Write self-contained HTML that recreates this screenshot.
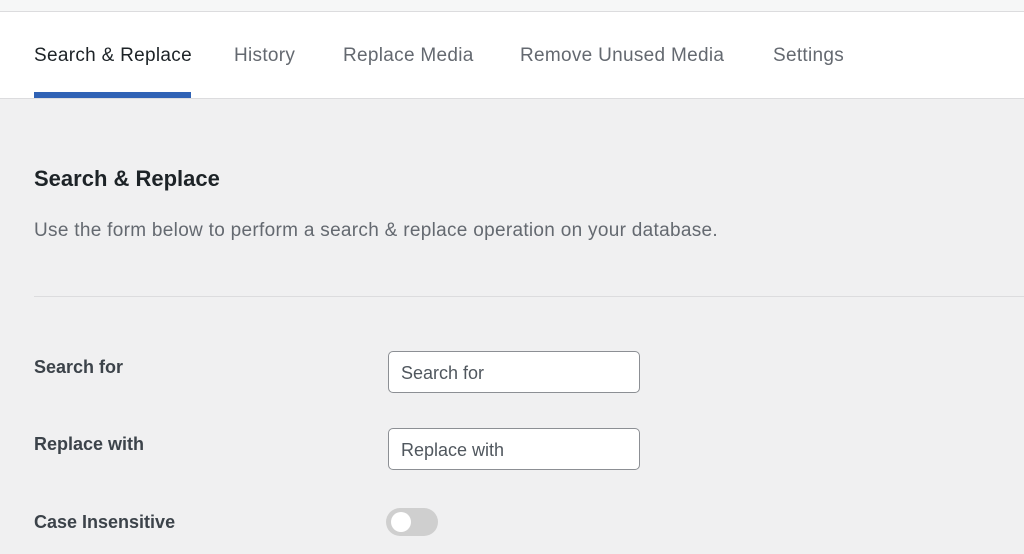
<!DOCTYPE html>
<html><head><style>
*{margin:0;padding:0;box-sizing:border-box}
body{width:1024px;height:554px;overflow:hidden;background:#f0f0f1;font-family:"Liberation Sans",sans-serif;position:relative}
.top{position:absolute;left:0;top:0;width:1024px;height:12px;background:#f6f7f7;border-bottom:1px solid #dcdcde}
.hdr{position:absolute;left:0;top:12px;width:1024px;height:87px;background:#fff;border-bottom:1px solid #dcdcde}
.tab{position:absolute;top:33px;font-size:19px;color:#646970;white-space:nowrap;letter-spacing:0.3px}
.ul{position:absolute;left:34px;top:80px;width:157px;height:6px;background:#2f62b5}
.t{position:absolute;white-space:nowrap}
.in{position:absolute;left:388px;width:252px;height:42px;background:#fff;border:1px solid #8c8f94;border-radius:5px;font-size:18px;color:#50575e;padding:11px 12px}
</style></head><body>
<div class="top"></div>
<div class="hdr">
<div class="tab" style="left:34px;color:#1d2327">Search &amp; Replace</div>
<div class="tab" style="left:234px">History</div>
<div class="tab" style="left:343px">Replace Media</div>
<div class="tab" style="left:520px">Remove Unused Media</div>
<div class="tab" style="left:773px">Settings</div>
<div class="ul"></div>
</div>
<div class="t" style="left:34px;top:166px;font-size:22px;font-weight:bold;color:#1d2327">Search &amp; Replace</div>
<div class="t" style="left:34px;top:220px;font-size:19px;letter-spacing:0.3px;color:#646970">Use the form below to perform a search &amp; replace operation on your database.</div>
<div style="position:absolute;left:34px;top:296px;width:990px;height:1px;background:#dcdcde"></div>
<div class="t" style="left:34px;top:357px;font-size:18px;font-weight:bold;color:#3c434a">Search for</div>
<div class="t" style="left:34px;top:434px;font-size:18px;font-weight:bold;color:#3c434a">Replace with</div>
<div class="t" style="left:34px;top:512px;font-size:18px;font-weight:bold;color:#3c434a">Case Insensitive</div>
<div class="in" style="top:351px">Search for</div>
<div class="in" style="top:428px">Replace with</div>
<div style="position:absolute;left:386px;top:508px;width:52px;height:28px;border-radius:14px;background:#cfcfcf"></div>
<div style="position:absolute;left:391px;top:512px;width:20px;height:20px;border-radius:50%;background:#fff"></div>
</body></html>
